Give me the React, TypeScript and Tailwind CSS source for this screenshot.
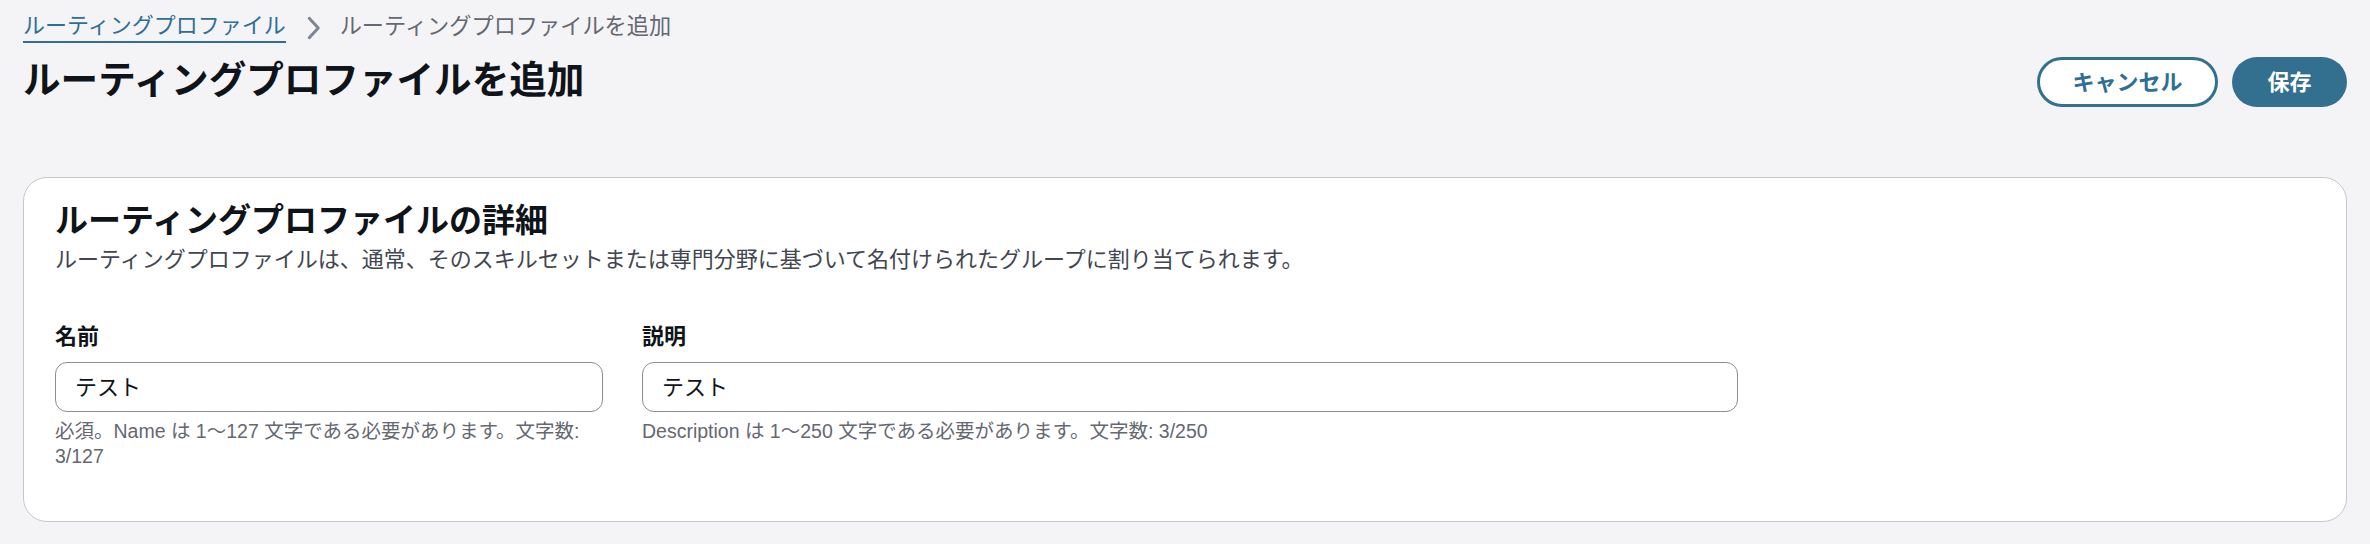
import React from "react";

const font = "font-[family-name:'Liberation_Sans','Noto_Sans_CJK_JP',sans-serif]";

export default function App() {
  return (
    <div className={`${font} min-h-[544px] bg-[#f4f4f6] px-[23px] text-[#0f141a]`}>
      {/* Breadcrumb */}
      <div className="flex items-center pt-[11px]">
        <a className="border-b-2 border-[#2f6f97] text-[22px] leading-[30px] text-[#2f6f97]">
          ルーティングプロファイル
        </a>
        <svg
          className="mx-[15px] mt-[1px] h-[24px] w-[24px] text-[#7d8590]"
          viewBox="0 0 16 16"
          fill="none"
          stroke="currentColor"
          strokeWidth="2"
          strokeLinecap="round"
          strokeLinejoin="round"
        >
          <path d="m5.5 1.5 6 6.5-6 6.5" />
        </svg>
        <span className="text-[22.2px] leading-[30px] text-[#656871]">
          ルーティングプロファイルを追加
        </span>
      </div>

      {/* Header row */}
      <div className="mt-[14px] flex items-start justify-between">
        <h1 className="text-[37.6px] font-bold leading-[46px]">ルーティングプロファイルを追加</h1>
        <div className="flex gap-[14px]">
          <button className="flex h-[50px] w-[181px] items-center justify-center rounded-full border-[3px] border-[#33708f] bg-white text-[22px] font-bold text-[#2f6f97]">
            キャンセル
          </button>
          <button className="flex h-[50px] w-[115px] items-center justify-center rounded-full bg-[#33708f] text-[22px] font-bold text-white">
            保存
          </button>
        </div>
      </div>

      {/* Card */}
      <div className="mt-[70px] rounded-[24px] border border-[#c6c6cd] bg-white pb-[52px] pl-[31px] pr-[31px] pt-[22px]">
        <h2 className="text-[33px] font-bold leading-[42px]">ルーティングプロファイルの詳細</h2>
        <p className="mt-[3px] text-[22px] leading-[30px] text-[#424650]">
          ルーティングプロファイルは、通常、そのスキルセットまたは専門分野に基づいて名付けられたグループに割り当てられます。
        </p>

        <div className="mt-[47px] flex gap-[39px]">
          <div className="w-[548px]">
            <label className="block text-[22px] font-bold leading-[30px]">名前</label>
            <div className="mt-[10px] flex h-[50px] items-center rounded-[12px] border-[1.5px] border-[#8c8c94] px-[19px] text-[22px]">
              テスト
            </div>
            <p className="mt-[7px] text-[19.5px] leading-[25px] text-[#656871]">
              必須。Name は 1〜127 文字である必要があります。文字数:
              <br />
              3/127
            </p>
          </div>
          <div className="w-[1096px]">
            <label className="block text-[22px] font-bold leading-[30px]">説明</label>
            <div className="mt-[10px] flex h-[50px] items-center rounded-[12px] border-[1.5px] border-[#8c8c94] px-[19px] text-[22px]">
              テスト
            </div>
            <p className="mt-[7px] text-[19.5px] leading-[25px] text-[#656871]">
              Description は 1〜250 文字である必要があります。文字数: 3/250
            </p>
          </div>
        </div>
      </div>
    </div>
  );
}
